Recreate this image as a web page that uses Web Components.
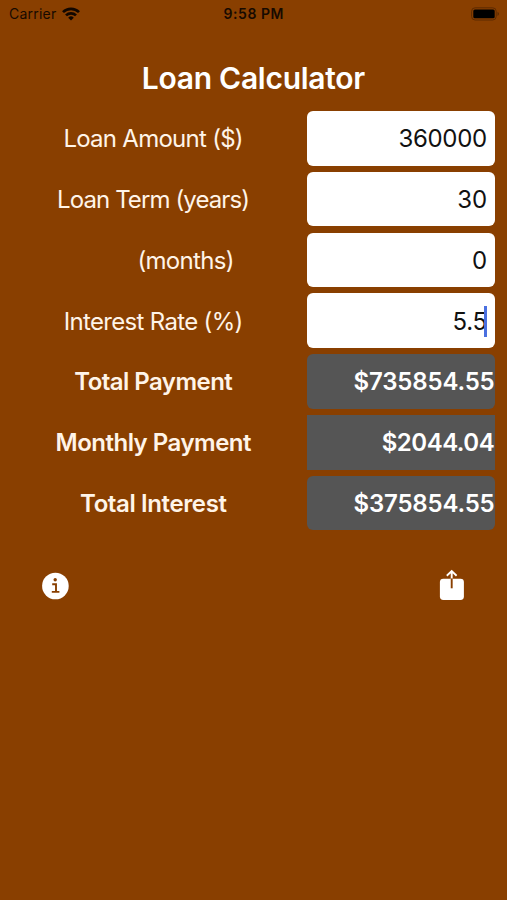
<!DOCTYPE html>
<html lang="en">
<head>
<meta charset="utf-8">
<title>Loan Calculator</title>
<style>
html,body{margin:0;height:100%;background:#893f00}
body{overflow:hidden;font-family:Inter,"Liberation Sans",sans-serif}
</style>
</head>
<body>
<loan-app></loan-app>
<script>
// Text whose tracking is adjusted so that its advance equals the "w" attribute.
class FitText extends HTMLElement{
  constructor(){
    super();
    this.attachShadow({mode:'open'}).innerHTML='<style>:host{display:inline-block;white-space:pre;line-height:1}span{display:inline-block}</style><span></span>';
  }
  connectedCallback(){
    const s=this.shadowRoot.querySelector('span');
    s.textContent=this.getAttribute('text');
    const w=parseFloat(this.getAttribute('w'));
    const ls=(w-s.getBoundingClientRect().width)/s.textContent.length;
    s.style.letterSpacing=ls.toFixed(3)+'px';
    s.style.marginRight=(-ls).toFixed(3)+'px';
  }
}
class StatusBar extends HTMLElement{
  constructor(){
    super();
    this.attachShadow({mode:'open'}).innerHTML=`<style>
:host{display:grid;grid-template-columns:1fr auto 1fr;align-items:center;height:27px;padding:0 7px 0 9px;color:#170a00;font-size:14px;box-sizing:border-box}
.l{display:flex;align-items:center;gap:6px}
.l fit-text,.t{padding-top:1px}
.t{font-weight:600;margin-right:2px}
.r{display:flex;justify-content:flex-end}
svg{display:block}
</style>
<div class="l"><fit-text text="Carrier" w="47.5"></fit-text>
<svg width="18" height="14" viewBox="0 0 18 14" fill="none" stroke="#120700" stroke-width="2.7"><path d="M1 5.1a11.4 11.4 0 0 1 16 0"/><path d="M4 8.4a7.2 7.2 0 0 1 10 0"/><path d="M9 13.6 6.2 10.7a4 4 0 0 1 5.6 0z" fill="#120700" stroke="none"/></svg></div>
<fit-text class="t" text="9:58 PM" w="60.5"></fit-text>
<div class="r"><svg width="29" height="14" viewBox="0 0 29 14"><rect x=".6" y=".8" width="24.6" height="12.2" rx="3.5" fill="none" stroke="#5d2b00"/><rect x="2.3" y="2.5" width="21.4" height="8.8" rx="1.6" fill="#000"/><path d="M26.5 4.8c2 .8 2 3.4 0 4.2z" fill="#5d2b00"/></svg></div>`;
  }
}
class LoanRow extends HTMLElement{
  connectedCallback(){
    const a=n=>this.getAttribute(n)||'';
    const out=this.hasAttribute('result');
    this.attachShadow({mode:'open'}).innerHTML=`<style>
:host{display:grid;grid-template-columns:307px 187.7px;height:54.6px;font-size:24px;color:#fff4e8;font-weight:${out?600:400}}
.label{display:flex;align-items:center;justify-content:center;padding-left:${a('indent')||0}px}
fit-text{padding-top:2px}
.box{position:relative;display:flex;align-items:center;justify-content:flex-end;border-radius:${this.hasAttribute('square')?0:6}px;background:${out?'#555':'#fff'};color:${out?'#fff':'#111'};padding-right:${out?0:7.5}px}
i{position:absolute;right:7.7px;top:12.5px;width:3px;height:31px;background:#4a70e0}
</style>
<div class="label"><fit-text text="${a('label')}" w="${a('lw')}"></fit-text></div>
<div class="box"><fit-text text="${a('value')}" w="${a('vw')}"></fit-text>${this.hasAttribute('caret')?'<i></i>':''}</div>`;
  }
}
class LoanActions extends HTMLElement{
  constructor(){
    super();
    this.attachShadow({mode:'open'}).innerHTML=`<style>
:host{display:flex;justify-content:space-between;padding:38.4px 42px 0}svg{display:block}
</style>
<svg width="27" height="34" viewBox="0 0 27 34"><circle cx="13.4" cy="17" r="13.3" fill="#fff"/><circle cx="13.2" cy="10.7" r="1.7" fill="#893f00"/><path d="M10.2 15.3h3.8v7.4M9.8 22.9h7.6" fill="none" stroke="#893f00" stroke-width="1.9"/></svg>
<svg width="27" height="34" viewBox="0 0 27 34"><rect x="1.9" y="9.7" width="24" height="21.3" rx="3.4" fill="#fff"/><path d="M13.7 9.7V2.4M8.8 6.8l4.9-4.7 4.9 4.7" fill="none" stroke="#fff" stroke-width="1.9"/><path d="M13.7 9.5v9.8" stroke="#893f00" stroke-width="1.9"/></svg>`;
  }
}
class LoanApp extends HTMLElement{
  constructor(){
    super();
    this.attachShadow({mode:'open'}).innerHTML=`<style>
:host{display:block;height:900px;background:#893f00}
h1{margin:0;padding-top:35.5px;height:48.5px;display:flex;justify-content:center;align-items:flex-start;line-height:1;font-size:30px;font-weight:600;color:#fff}
main{display:grid;row-gap:6.2px}
</style>
<status-bar></status-bar>
<h1><fit-text text="Loan Calculator" w="223"></fit-text></h1>
<main>
<loan-row label="Loan Amount ($)" lw="179.5" value="360000" vw="88.5"></loan-row>
<loan-row label="Loan Term (years)" lw="192" value="30" vw="30"></loan-row>
<loan-row label="(months)" lw="96.5" indent="65" value="0" vw="15.5"></loan-row>
<loan-row label="Interest Rate (%)" lw="179" value="5.5" vw="34.5" caret></loan-row>
<loan-row result label="Total Payment" lw="158" value="$735854.55" vw="141"></loan-row>
<loan-row result square label="Monthly Payment" lw="195.5" value="$2044.04" vw="112.5"></loan-row>
<loan-row result label="Total Interest" lw="146.5" value="$375854.55" vw="141"></loan-row>
</main>
<loan-actions></loan-actions>`;
  }
}
customElements.define('fit-text',FitText);
customElements.define('status-bar',StatusBar);
customElements.define('loan-row',LoanRow);
customElements.define('loan-actions',LoanActions);
customElements.define('loan-app',LoanApp);
</script>
</body>
</html>
